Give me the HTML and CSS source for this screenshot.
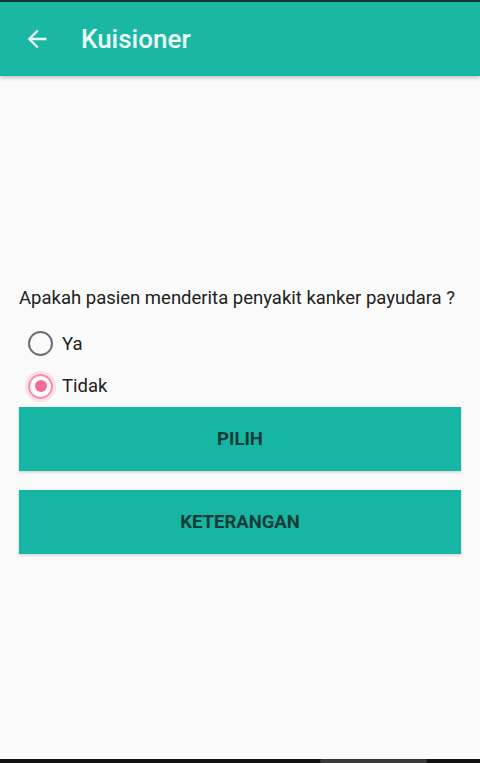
FILE: index.html
```html
<!DOCTYPE html>
<html lang="en">
    <head>
        <meta charset="utf-8">
        <link rel="stylesheet" href="styles.css">
    </head>
    <body>
        <div class="status"></div>
        <div class="toolbar">
            <svg class="back" width="24" height="24" viewBox="0 0 24 24">
                <path d="M20 11H7.83l5.59-5.59L12 4l-8 8 8 8 1.41-1.41L7.83 13H20v-2z" fill="#e8fbf8"/>
            </svg>
            <h1 class="title">Kuisioner</h1>
        </div>
        <div class="content">
            <p class="question">Apakah pasien menderita penyakit kanker payudara ?</p>
            <div class="options">
                <label class="option"><i class="radio"></i>Ya</label>
                <label class="option checked"><i class="radio"></i>Tidak</label>
            </div>
            <div class="btn">PILIH</div>
            <div class="btn">KETERANGAN</div>
        </div>
        <div class="navbar"><span class="pill"></span></div>
    </body>
</html>
```

FILE: styles.css
```css
* {
    margin: 0;
    padding: 0;
    box-sizing: border-box;
}
html, body {
    height: 100%;
}
body {
    background-color: #fafafa;
    font-family: Roboto, "Liberation Sans", sans-serif;
    display: flex;
    flex-direction: column;
    overflow: hidden;
}
.status {
    height: 2px;
    background-color: #0f3a34;
}
.toolbar {
    height: 74px;
    background-color: #1ab7a5;
    display: flex;
    align-items: center;
    padding-left: 23px;
    box-shadow: 0 2px 4px rgba(0, 0, 0, 0.22);
    position: relative;
    z-index: 1;
}
.back {
    width: 28px;
    height: 28px;
}
.title {
    margin-left: 30px;
    font-size: 26px;
    font-weight: 500;
    color: #eefcf9;
}
.content {
    flex: 1;
    padding: 210px 19px 0;
}
.question {
    font-size: 18.5px;
    color: #212121;
    line-height: 24px;
}
.options {
    margin-top: 12px;
}
.option {
    display: flex;
    align-items: center;
    height: 43px;
    font-size: 18.5px;
    color: #212121;
    padding-left: 9px;
}
.option:last-child {
    height: 42px;
}
.radio {
    width: 25px;
    height: 25px;
    border: 2px solid #6d6d6d;
    border-radius: 50%;
    margin-right: 9px;
    display: flex;
    align-items: center;
    justify-content: center;
}
.checked .radio {
    border-color: #f48fb1;
    box-shadow: 0 0 0 3px #fbe0ea;
}
.checked .radio::after {
    content: "";
    width: 12px;
    height: 12px;
    border-radius: 50%;
    background-color: #f06d9a;
}
.btn {
    height: 64px;
    background-color: #17b5a4;
    color: #163c37;
    font-size: 18.5px;
    font-weight: 700;
    display: flex;
    align-items: center;
    justify-content: center;
    box-shadow: 0 1px 3px rgba(0, 0, 0, 0.2);
}
.btn + .btn {
    margin-top: 19px;
}
.navbar {
    height: 4px;
    background-color: #111;
    display: flex;
    justify-content: flex-end;
    padding-right: 53px;
}
.pill {
    width: 107px;
    height: 4px;
    background-color: #3a3a3a;
    border-radius: 2px;
}
```
